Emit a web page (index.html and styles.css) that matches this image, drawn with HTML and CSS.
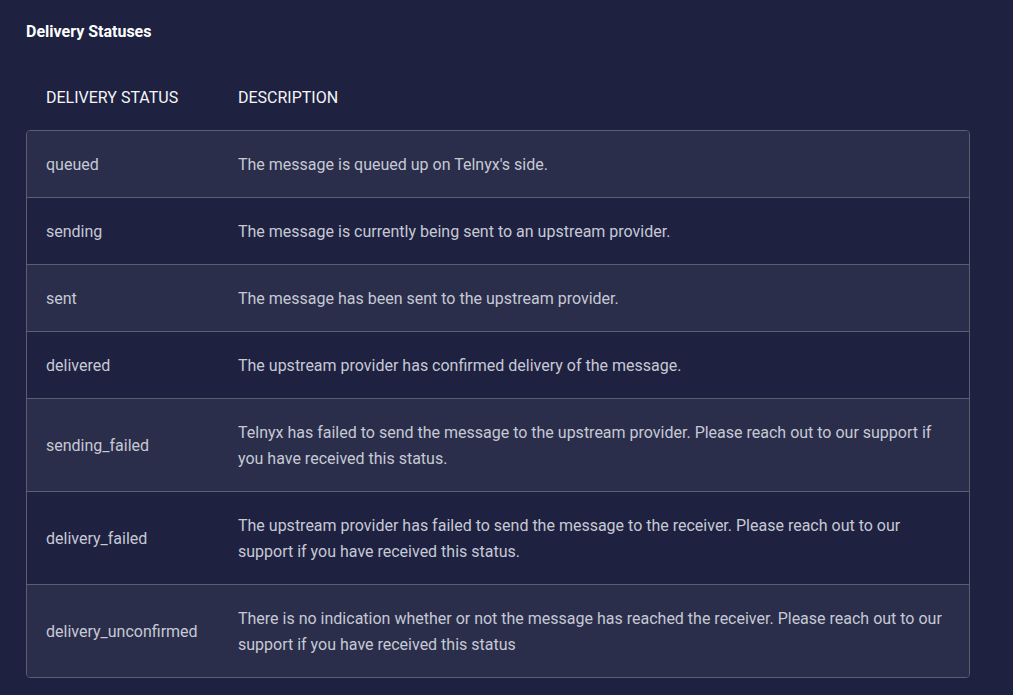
FILE: index.html
```html
<!DOCTYPE html>
<html>
<head>
<meta charset="utf-8">
<link rel="stylesheet" href="styles.css">
</head>
<body>
<div class="page">
  <h2 class="title">Delivery Statuses</h2>
  <div class="head">
    <div class="c1">DELIVERY STATUS</div>
    <div class="c2">DESCRIPTION</div>
  </div>
  <div class="box">
    <div class="row alt"><div class="c1">queued</div><div class="c2">The message is queued up on Telnyx's side.</div></div>
    <div class="row"><div class="c1">sending</div><div class="c2">The message is currently being sent to an upstream provider.</div></div>
    <div class="row alt"><div class="c1">sent</div><div class="c2">The message has been sent to the upstream provider.</div></div>
    <div class="row"><div class="c1">delivered</div><div class="c2">The upstream provider has confirmed delivery of the message.</div></div>
    <div class="row alt"><div class="c1">sending_failed</div><div class="c2">Telnyx has failed to send the message to the upstream provider. Please reach out to our support if you have received this status.</div></div>
    <div class="row"><div class="c1">delivery_failed</div><div class="c2">The upstream provider has failed to send the message to the receiver. Please reach out to our support if you have received this status.</div></div>
    <div class="row alt"><div class="c1">delivery_unconfirmed</div><div class="c2">There is no indication whether or not the message has reached the receiver. Please reach out to our support if you have received this status</div></div>
  </div>
</div>
</body>
</html>
```
FILE: styles.css
```css
html, body {
  margin: 0;
  padding: 0;
  background: #1e2140;
  font-family: Roboto, "Liberation Sans", sans-serif;
}
.page {
  padding: 21px 43px 0 26px;
}
.title {
  margin: 0;
  font-size: 16px;
  line-height: 22px;
  font-weight: 700;
  color: #ffffff;
}
.head {
  display: flex;
  margin-top: 22px;
  padding: 20px 0 19px;
  font-size: 16px;
  line-height: 26px;
  color: #f4f5f8;
}
.head .c1 {
  width: 192px;
  padding-left: 20px;
}
.box {
  border: 1px solid #5c5f72;
  border-radius: 4px;
  overflow: hidden;
}
.row {
  display: flex;
  align-items: center;
  padding: 21px 0 19px;
  font-size: 16px;
  line-height: 26px;
  color: #c6c9d5;
  background: #1e2140;
  border-top: 1px solid #5c5f72;
}
.row:first-child {
  border-top: none;
}
.row.alt {
  background: #2a2e4a;
}
.row .c1 {
  width: 192px;
  padding-left: 19px;
  flex-shrink: 0;
}
.c2 {
  flex: 1;
  padding-right: 24px;
}
```
